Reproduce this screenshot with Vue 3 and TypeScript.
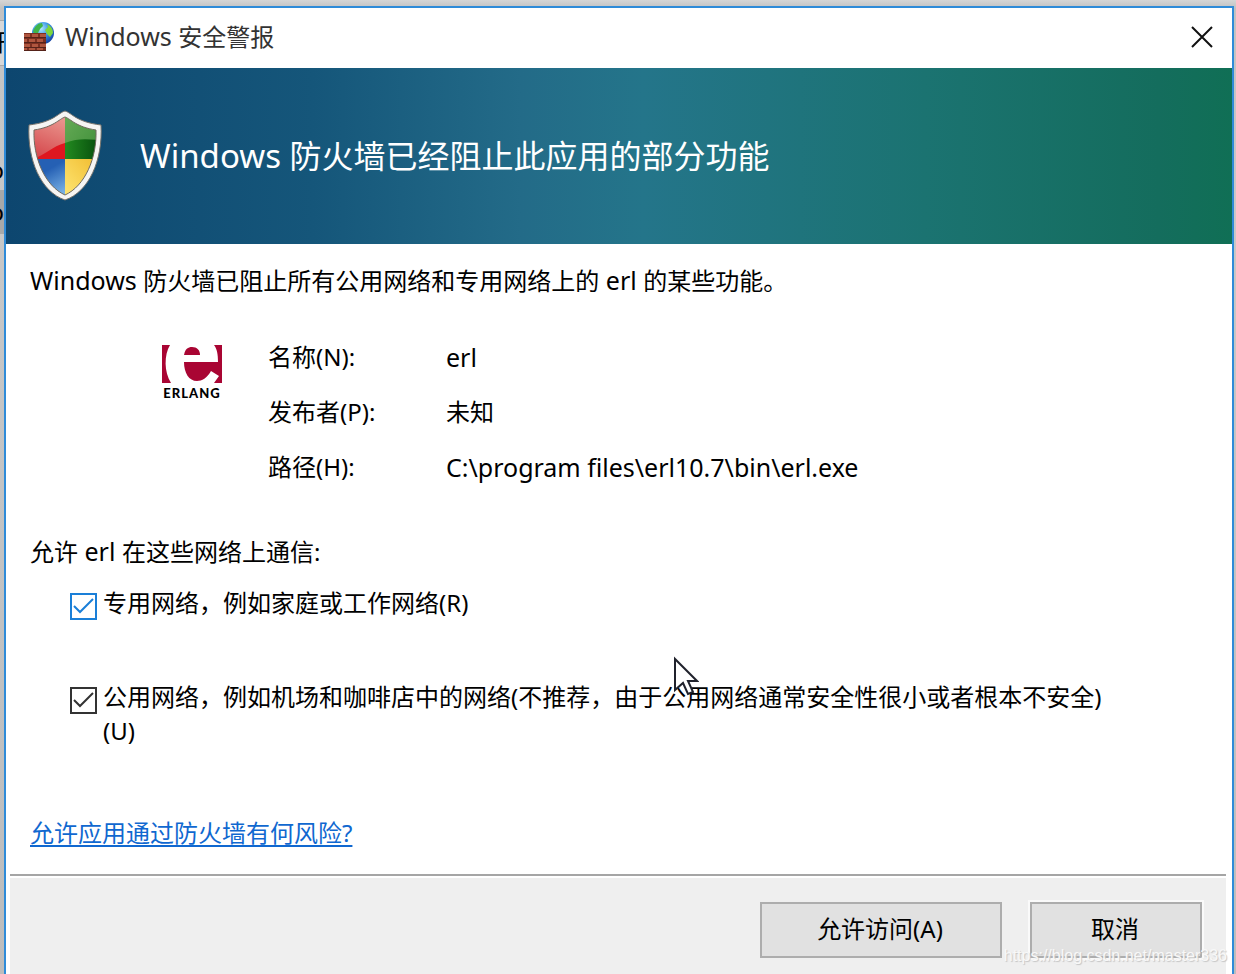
<script setup lang="ts">
import { ref } from 'vue'

interface Detail {
  label: string
  value: string
  latin: boolean
}

interface NetworkOption {
  id: string
  label: string
  checked: boolean
}

const details: Detail[] = [
  { label: '名称(N):', value: 'erl', latin: true },
  { label: '发布者(P):', value: '未知', latin: false },
  { label: '路径(H):', value: 'C:\\program files\\erl10.7\\bin\\erl.exe', latin: true },
]

const networks = ref<NetworkOption[]>([
  { id: 'private', label: '专用网络，例如家庭或工作网络(R)', checked: true },
  {
    id: 'public',
    label: '公用网络，例如机场和咖啡店中的网络(不推荐，由于公用网络通常安全性很小或者根本不安全)(U)',
    checked: true,
  },
])
</script>

<template>
  <div class="desktop">
    <div class="behind" aria-hidden="true">
      <span class="behind-bar"></span>
      <span class="behind-row"></span>
      <span class="behind-text first">开</span>
      <span class="behind-text second">o</span>
      <span class="behind-text third">o</span>
    </div>

    <main class="dialog" role="dialog" aria-labelledby="dialog-title">
      <header class="titlebar">
        <svg class="app-icon" viewBox="0 0 32 32" aria-hidden="true">
          <defs>
            <radialGradient id="globe" cx="0.4" cy="0.3" r="0.75">
              <stop offset="0" stop-color="#b4ecff" />
              <stop offset="0.5" stop-color="#3593e6" />
              <stop offset="1" stop-color="#123a9c" />
            </radialGradient>
          </defs>
          <circle cx="20" cy="12" r="11" fill="url(#globe)" />
          <path d="M10 10c2-5 5-8 9-8l1 3-3 3-2 4-4 1z" fill="#3fb54a" />
          <path d="M24 3c4 2 6 5 6 9l-3 4-3-3-2-4 3-3z" fill="#7ed63c" />
          <rect x="1" y="12" width="22" height="18" fill="#7c2f21" />
          <path d="M1 13h6v3H1zM9 13h6v3H9zM17 13h6v3h-6zM1 18h3v3H1zM6 18h6v3H6zM14 18h6v3h-6zM1 23h6v3H1zM9 23h6v3H9zM17 23h6v3h-6zM1 27h3v2H1zM6 27h6v2H6zM14 27h6v2h-6z" fill="#b0563f" />
          <path d="M1 16.500h22M1 21.500h22M1 26.500h22M1 29.500h22" stroke="#552219" />
        </svg>
        <span id="dialog-title" class="title"><span class="latin">Windows </span>安全警报</span>
        <button class="close" type="button" aria-label="关闭">
          <svg viewBox="0 0 22 22" aria-hidden="true">
            <path d="M1 1L21 21M21 1L1 21" fill="none" stroke="#111" stroke-width="2" />
          </svg>
        </button>
      </header>

      <section class="banner">
        <svg class="shield" viewBox="0 0 76 92" aria-hidden="true">
          <defs>
            <clipPath id="shield-inner">
              <path d="M38 7C32 9 27 17 7 20C6 48 18 76 38 85C58 76 70 48 69 20C49 17 44 9 38 7Z" />
            </clipPath>
            <linearGradient id="red" x1="0.8" y1="0" x2="0.5" y2="1">
              <stop offset="0" stop-color="#eca097" />
              <stop offset="1" stop-color="#d64a4e" />
            </linearGradient>
            <linearGradient id="green" x1="0" y1="0" x2="1" y2="1">
              <stop offset="0" stop-color="#68ad58" />
              <stop offset="1" stop-color="#3a8a35" />
            </linearGradient>
            <linearGradient id="green-low" x1="0" y1="0" x2="1" y2="0">
              <stop offset="0" stop-color="#238a20" />
              <stop offset="1" stop-color="#07500d" />
            </linearGradient>
            <linearGradient id="blue" x1="0.3" y1="0" x2="0.8" y2="1">
              <stop offset="0.3" stop-color="#2560b4" />
              <stop offset="1" stop-color="#88c0ee" />
            </linearGradient>
            <linearGradient id="yellow" x1="0" y1="1" x2="1" y2="0">
              <stop offset="0" stop-color="#ffe979" />
              <stop offset="1" stop-color="#f0b92a" />
            </linearGradient>
          </defs>
          <path d="M38 1C31 3 27 12 2 15C0 50 14 82 38 90C62 82 76 50 74 15C49 12 45 3 38 1Z" fill="#f6f5f3" stroke="#77736c" stroke-width="1" />
          <g clip-path="url(#shield-inner)">
            <rect width="38" height="49" fill="url(#red)" />
            <rect x="38" width="38" height="49" fill="url(#green)" />
            <path d="M5 49C18 46 25 36 38 33V49Z" fill="#df1720" />
            <path d="M38 33C50 28 60 29 71 30V49H38Z" fill="url(#green-low)" />
            <rect y="49" width="38" height="43" fill="url(#blue)" />
            <rect x="38" y="49" width="38" height="43" fill="url(#yellow)" />
          </g>
          <path d="M38 7C32 9 27 17 7 20C6 48 18 76 38 85C58 76 70 48 69 20C49 17 44 9 38 7Z" fill="none" stroke="#6f6a5e" stroke-width="1" />
        </svg>
        <h1><span class="latin">Windows </span>防火墙已经阻止此应用的部分功能</h1>
      </section>

      <section class="content">
        <p class="summary"><span class="latin">Windows </span>防火墙已阻止所有公用网络和专用网络上的<span class="latin"> erl </span>的某些功能。</p>

        <div class="program">
          <svg class="erlang" viewBox="0 0 60 54" role="img" aria-label="ERLANG">
            <path d="M0 0H8C2 10 2 27 9 38H0Z" fill="#a90533" />
            <path d="M52 0H60V38H52L57 31L56 17C56 9 55 4 52 0Z" fill="#a90533" />
            <path d="M22 10C23 4 26 2 30 2C35 2 38 5 38 10Z" fill="#a90533" />
            <path d="M22 17H59V31H57L49 26C45 33 40 36 35 36C27 36 22 28 22 17Z" fill="#a90533" />
            <text x="30" y="53" text-anchor="middle" class="erlang-name">ERLANG</text>
          </svg>
          <dl>
            <div v-for="item in details" :key="item.label" class="detail">
              <dt>{{ item.label }}</dt>
              <dd :class="{ latin: item.latin }">{{ item.value }}</dd>
            </div>
          </dl>
        </div>

        <fieldset>
          <legend>允许<span class="latin"> erl </span>在这些网络上通信:</legend>
          <div v-for="network in networks" :key="network.id" class="option" :class="network.id">
            <span class="box">
              <input :id="network.id" v-model="network.checked" type="checkbox" />
              <svg v-if="network.checked" viewBox="0 0 27 27" aria-hidden="true">
                <path d="M4 13L10 19L23 6" fill="none" stroke="currentColor" stroke-width="2" />
              </svg>
            </span>
            <label :for="network.id">{{ network.label }}</label>
          </div>
        </fieldset>

        <a class="risk" href="#risks">允许应用通过防火墙有何风险?</a>
      </section>

      <footer>
        <button class="action allow" type="button">允许访问(A)</button>
        <button class="action cancel" type="button">取消</button>
      </footer>
    </main>

    <svg class="cursor" viewBox="0 0 26 40" aria-hidden="true">
      <path d="M2 3V34L10 27L15 38L20 36L15 25H24Z" fill="#fff" stroke="#20222c" stroke-width="2" />
    </svg>
    <span class="watermark">https://blog.csdn.net/master336</span>
  </div>
</template>

<style>
body {
  margin: 0;
}
</style>

<style scoped>
.desktop {
  position: relative;
  box-sizing: border-box;
  display: flex;
  min-height: 100vh;
  padding: 6px 2px 0 4px;
  overflow: hidden;
  background: linear-gradient(#d6d6d6, #c2c2c2 8px, #c8c8c8 200px, #bdbdbd);
  color: #000;
  font-family: "Noto Sans", "Noto Sans CJK SC", sans-serif;
  font-size: 24px;
  line-height: 36px;
}

.latin {
  font-size: 25px;
}

span.latin {
  line-height: 1;
}

.behind {
  position: absolute;
  inset: 0 auto 0 0;
  width: 4px;
  overflow: hidden;
}

.behind-bar {
  position: absolute;
  top: 20px;
  left: 0;
  width: 5px;
  height: 44px;
  border-top: 1px solid #aaa;
  border-bottom: 1px solid #aaa;
  background: #d8d8d8;
}

.behind-row {
  position: absolute;
  top: 190px;
  left: 0;
  width: 5px;
  height: 44px;
  background: #a8a8a8;
}

.behind-text {
  position: absolute;
  right: 0;
}

.first {
  top: 24px;
  right: -4px;
}

.second {
  top: 152px;
}

.third {
  top: 194px;
}

.dialog {
  position: relative;
  flex: 1;
  display: flex;
  flex-direction: column;
  min-width: 0;
  border: 2px solid #2f8bd8;
  border-bottom: 0;
  background: #fff;
}

.titlebar {
  box-sizing: border-box;
  display: flex;
  align-items: center;
  height: 60px;
  padding: 0 19px 3px 17px;
}

.app-icon {
  width: 32px;
  height: 32px;
}

.title {
  flex: 1;
  margin-left: 10px;
  color: #333;
}

.close {
  display: flex;
  padding: 0;
  border: 0;
  background: none;
}

.close svg {
  width: 22px;
  height: 22px;
}

.banner {
  display: flex;
  align-items: center;
  height: 176px;
  padding: 0 21px;
  background: linear-gradient(90deg, #0d466f 0%, #15567a 25%, #236b88 42%, #24758a 52%, #1b7371 75%, #146d5d 94%, #106f55 100%);
  color: #fff;
}

.shield {
  flex: none;
  width: 76px;
  height: 92px;
}

h1 {
  margin: 0 0 0 37px;
  font-size: 32px;
  font-weight: 400;
  line-height: 48px;
}

h1 .latin {
  font-size: 33px;
}

.content {
  padding: 19px 24px 23px;
}

.summary {
  margin: 0;
}

.program {
  display: flex;
  gap: 46px;
  margin-top: 40px;
  padding-left: 132px;
}

.erlang {
  flex: none;
  width: 60px;
  height: 54px;
  margin-top: 6px;
}

.erlang-name {
  font-family: Lato, sans-serif;
  font-size: 13px;
  font-weight: 900;
  letter-spacing: 1px;
}

dl {
  display: grid;
  gap: 19px;
  margin: 0;
}

.detail {
  display: grid;
  grid-template-columns: 178px auto;
}

dd {
  margin: 0;
}

fieldset {
  min-width: 0;
  margin: 49px 0 0;
  padding: 0;
  border: 0;
}

legend {
  padding: 0;
}

.option {
  display: flex;
  gap: 6px;
  margin-top: 16px;
  padding: 0 100px 0 40px;
  color: #333;
  line-height: 34px;
}

.public {
  margin-top: 60px;
}

.private {
  color: #1a7fd8;
}

.box {
  position: relative;
  flex: none;
  width: 27px;
  height: 27px;
  margin-top: 7px;
}

.box input {
  appearance: none;
  display: block;
  width: 27px;
  height: 27px;
  margin: 0;
  border: 2px solid currentColor;
  background: #fff;
  color: inherit;
}

.box svg {
  position: absolute;
  inset: 0;
  pointer-events: none;
}

label {
  color: #000;
}

.risk {
  display: inline-block;
  margin-top: 67px;
  color: #1068d0;
  text-decoration-thickness: 2px;
  text-underline-offset: 3px;
}

footer {
  flex: 1;
  display: flex;
  align-items: flex-start;
  justify-content: flex-end;
  gap: 28px;
  margin: 0 6px 0 4px;
  padding: 26px 24px 16px;
  border-top: 2px solid #a5a5a5;
  box-shadow: inset 0 2px #fff;
  background: #efefef;
}

.action {
  box-sizing: border-box;
  height: 56px;
  padding: 0 2px 2px 0;
  border: 2px solid #adadad;
  background: #e1e1e1;
  color: #000;
  font: inherit;
}

.allow {
  width: 242px;
}

.cancel {
  width: 172px;
  outline: 2px solid #fafafa;
}

.cursor {
  position: absolute;
  top: 656px;
  left: 673px;
  width: 26px;
  height: 40px;
}

.watermark {
  position: absolute;
  right: 9px;
  bottom: 8px;
  color: #f8f8f8;
  font-family: "Liberation Sans", Arial, sans-serif;
  font-size: 16px;
  line-height: 20px;
  text-shadow: 1px 1px 1px #c4c4c4;
}
</style>
